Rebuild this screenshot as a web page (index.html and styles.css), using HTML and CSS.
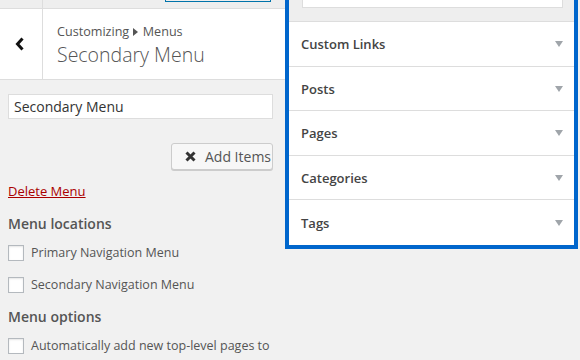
FILE: index.html
```html
<!DOCTYPE html>
<html lang="en">
<head>
    <meta charset="UTF-8">
    <meta name="viewport" content="width=device-width, initial-scale=1.0">
    <title>Customizing Menus</title>
    <link rel="stylesheet" href="styles.css">
</head>
<body>

<div class="customizer">
    <div class="sidebar">
        <div class="topbar">
            <div class="topbar-close"></div>
            <div class="publish"></div>
        </div>
        <div class="section-header">
            <button class="back">
                <svg width="10" height="14" viewBox="0 0 10 14"><polyline points="7.5,1.5 2.5,7 7.5,12.5" fill="none" stroke="#111" stroke-width="3"/></svg>
            </button>
            <div class="section-title">
                <div class="crumb">Customizing <svg width="5" height="8" viewBox="0 0 5 8"><polygon points="0,0 5,4 0,8" fill="#555"/></svg> Menus</div>
                <div class="title">Secondary Menu</div>
            </div>
        </div>

        <div class="menu-body">
            <input type="text" class="menu-name" value="Secondary Menu">
            <div class="add-row">
                <button class="add-items">
                    <svg width="11" height="11" viewBox="0 0 11 11"><path d="M1.5 1.5 L9.5 9.5 M9.5 1.5 L1.5 9.5" stroke="#333" stroke-width="3"/></svg>
                    Add Items
                </button>
            </div>
            <a href="#" class="delete">Delete Menu</a>

            <h3>Menu locations</h3>
            <label class="check"><span class="box"></span>Primary Navigation Menu</label>
            <label class="check"><span class="box"></span>Secondary Navigation Menu</label>

            <h3 class="options">Menu options</h3>
            <label class="check"><span class="box"></span>Automatically add new top-level pages to</label>
        </div>
    </div>

    <div class="available">
        <div class="items-panel">
            <div class="search-area">
                <div class="search"></div>
            </div>
            <div class="item-type">Custom Links<span class="arrow"></span></div>
            <div class="item-type">Posts<span class="arrow"></span></div>
            <div class="item-type">Pages<span class="arrow"></span></div>
            <div class="item-type">Categories<span class="arrow"></span></div>
            <div class="item-type">Tags<span class="arrow"></span></div>
        </div>
    </div>
</div>

</body>
</html>
```

FILE: styles.css
```css
body {
    margin: 0;
    font-family: "Open Sans", "Liberation Sans", sans-serif;
    font-size: 13px;
    color: #555;
    background-color: #f1f1f1;
    overflow: hidden;
}
.customizer {
    display: flex;
    width: 580px;
    height: 360px;
}
.sidebar {
    width: 285px;
    flex-shrink: 0;
    background-color: #f1f1f1;
    overflow: hidden;
}
.topbar {
    height: 8px;
    display: flex;
    background-color: #eee;
    border-bottom: 1px solid #ddd;
}
.topbar-close {
    width: 42px;
    border-right: 1px solid #ddd;
}
.publish {
    width: 104px;
    height: 1px;
    margin-left: 122px;
    background-color: #eee;
    border: 1px solid #0073aa;
    border-top: none;
}
.section-header {
    display: flex;
    height: 70px;
    background-color: #fff;
    border-bottom: 1px solid #ddd;
}
.back {
    width: 43px;
    border: none;
    border-right: 1px solid #ddd;
    background: #fff;
    padding: 0 2px 0 0;
    display: flex;
    align-items: center;
    justify-content: center;
}
.section-title {
    padding: 14px 0 0 14px;
}
.crumb {
    font-size: 12.6px;
    line-height: 18px;
    color: #555;
}
.crumb svg {
    margin: 0 1px;
}
.title {
    font-size: 19.5px;
    font-weight: 300;
    line-height: 28px;
    color: #555;
}
.menu-body {
    padding: 14px 12px 0 8px;
}
.menu-name {
    display: block;
    box-sizing: border-box;
    width: 265px;
    height: 25px;
    margin: 0;
    padding: 0 5px;
    border: 1px solid #ddd;
    font-family: "Open Sans", "Liberation Sans", sans-serif;
    font-size: 14px;
    color: #333;
    background-color: #fff;
}
.add-row {
    display: flex;
    justify-content: flex-end;
    margin-top: 24px;
}
.add-items {
    display: flex;
    align-items: center;
    gap: 9px;
    box-sizing: border-box;
    width: 102px;
    height: 27px;
    padding: 0 0 0 13px;
    border: 1px solid #ccc;
    border-radius: 3px;
    background-color: #f7f7f7;
    box-shadow: 0 1px 0 #ccc;
    font-family: "Open Sans", "Liberation Sans", sans-serif;
    font-size: 14px;
    color: #555;
}
.delete {
    display: inline-block;
    margin-top: 12px;
    color: #a00;
    font-size: 13px;
    line-height: 18px;
}
h3 {
    margin: 14px 0 0;
    font-size: 14px;
    font-weight: 600;
    line-height: 19px;
    color: #555;
}
h3.options {
    margin-top: 14px;
}
.check {
    display: flex;
    align-items: center;
    gap: 7px;
    margin-top: 12px;
    font-size: 12.5px;
    line-height: 16px;
    color: #555;
    white-space: nowrap;
}
.check + .check {
    margin-top: 16px;
}
h3 + .check {
    margin-top: 12px;
}
.box {
    flex-shrink: 0;
    width: 14px;
    height: 14px;
    border: 1px solid #b4b9be;
    background-color: #fff;
    box-shadow: inset 0 1px 2px rgba(0, 0, 0, 0.1);
}
.available {
    width: 295px;
    background-color: #f1f1f1;
}
.items-panel {
    box-sizing: border-box;
    width: 293px;
    border: 4px solid #0066cc;
    border-top: none;
    background-color: #fff;
}
.search-area {
    height: 21px;
    padding: 0 11px 0 13px;
    background-color: #eee;
    border-bottom: 1px solid #ddd;
}
.search {
    height: 7px;
    background-color: #fff;
    border: 1px solid #ddd;
    border-top: none;
}
.item-type {
    display: flex;
    align-items: center;
    justify-content: space-between;
    height: 44px;
    padding: 0 11px 0 12px;
    border-bottom: 1px solid #ddd;
    font-size: 13px;
    font-weight: 600;
    color: #444;
}
.item-type:nth-child(3),
.item-type:nth-child(5) {
    height: 43px;
}
.item-type:last-child {
    height: 45px;
    border-bottom: none;
}
.arrow {
    width: 0;
    height: 0;
    border-left: 4px solid transparent;
    border-right: 4px solid transparent;
    border-top: 6px solid #a0a5aa;
}
```
